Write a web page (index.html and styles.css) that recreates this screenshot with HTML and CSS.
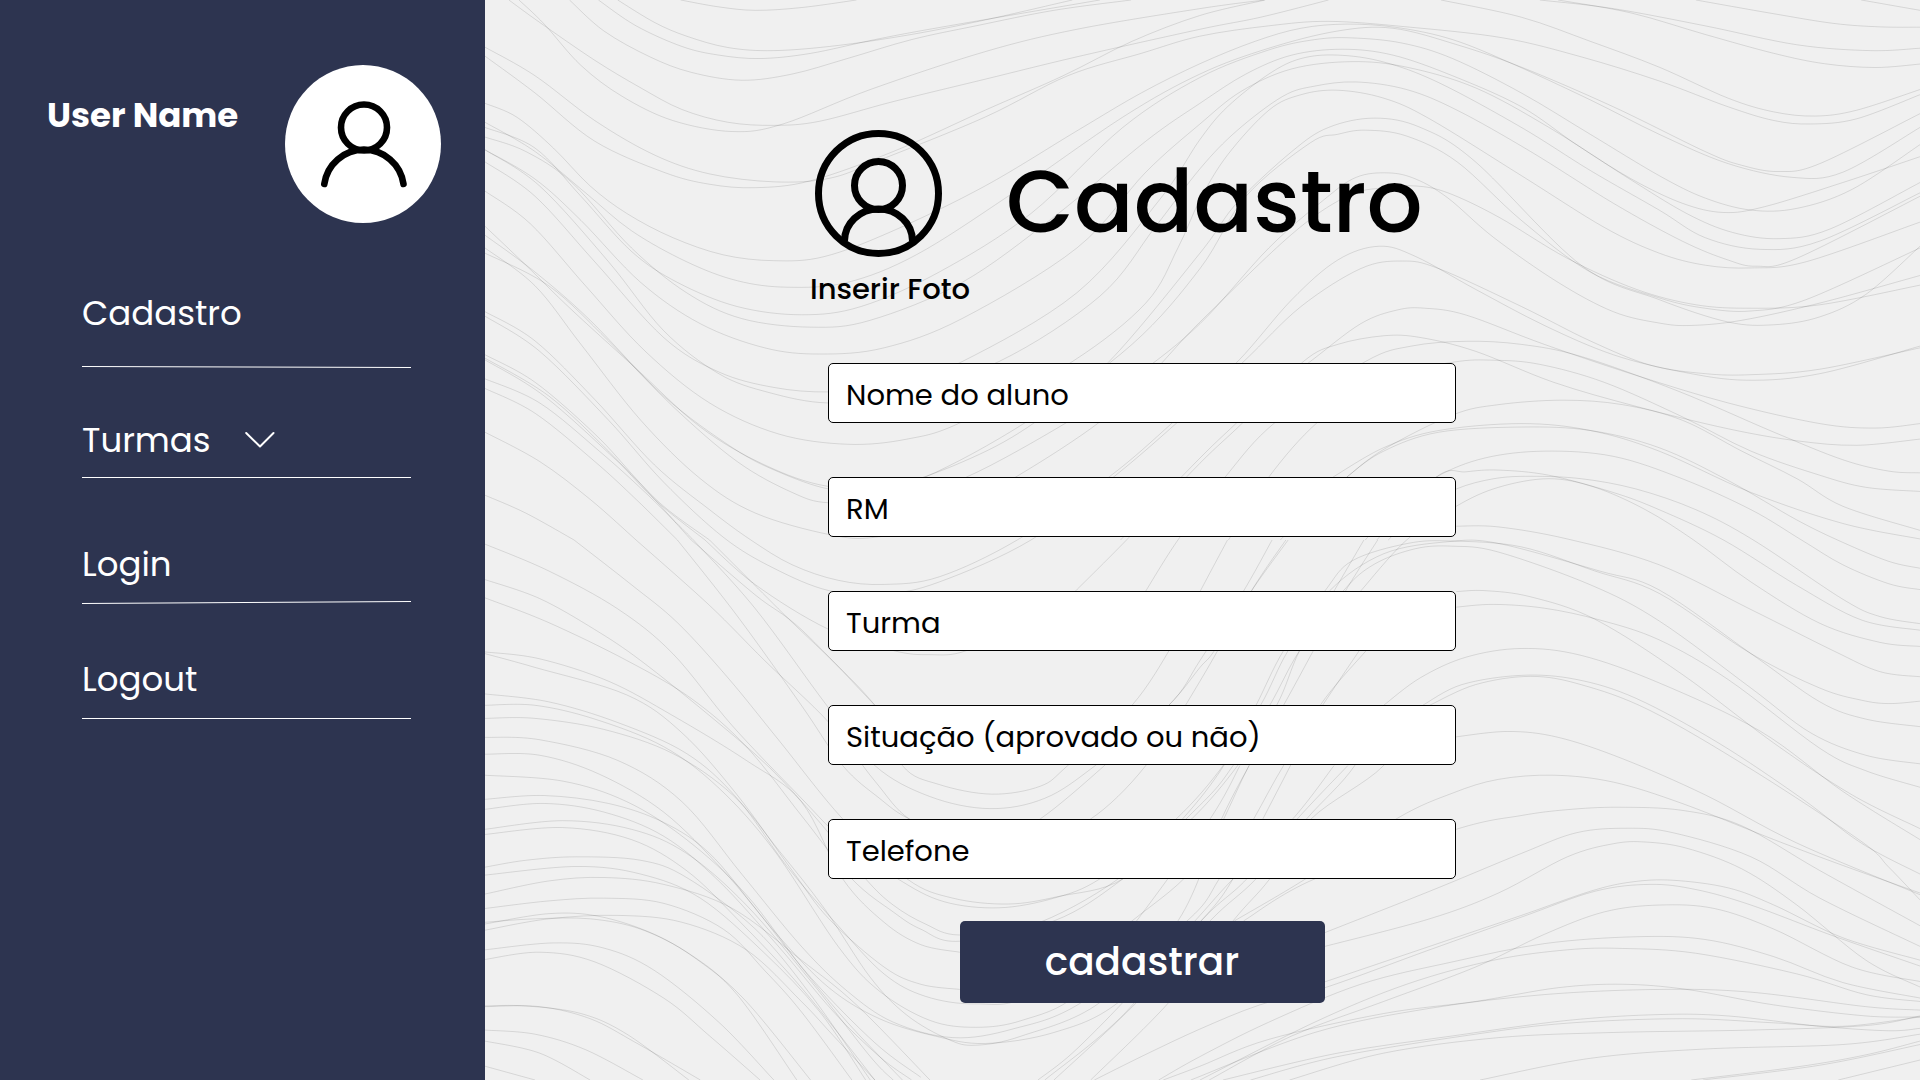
FILE: index.html
```html
<!DOCTYPE html>
<html lang="pt-BR">
<head>
<meta charset="utf-8">
<meta name="viewport" content="width=device-width, initial-scale=1">
<title>Cadastro</title>
<link rel="stylesheet" href="styles.css">
</head>
<body>
<div class="app">
  <aside class="sidebar">
    <div class="profile">
      <p class="profile-name">User Name</p>
      <svg class="avatar" viewBox="0 0 156 158" role="img" aria-label="Avatar">
        <ellipse cx="78" cy="79" rx="78" ry="79" fill="#fff"/>
        <g fill="none" stroke="#000" stroke-width="6.6" stroke-linecap="round">
          <circle cx="79" cy="62.5" r="23"/>
          <path d="M39.3 119A40 40 0 0 1 118.500 119"/>
        </g>
      </svg>
    </div>
    <nav class="menu" aria-label="Menu">
      <div class="menu-item roomy">
        <a href="#cadastro">Cadastro</a>
        <svg class="rule" viewBox="0 0 329 3" preserveAspectRatio="none" aria-hidden="true"><path d="M0 .5L329 1.5"/></svg>
      </div>
      <div class="menu-item">
        <a href="#turmas">Turmas
          <svg class="chevron" viewBox="0 0 30 18" aria-hidden="true"><path d="M1.200 2L15 15.500L28.500 2"/></svg>
        </a>
        <svg class="rule" viewBox="0 0 329 3" preserveAspectRatio="none" aria-hidden="true"><path d="M0 .5L329 .5"/></svg>
      </div>
      <div class="menu-item spaced">
        <a href="#login">Login</a>
        <svg class="rule" viewBox="0 0 329 3" preserveAspectRatio="none" aria-hidden="true"><path d="M0 2.500L329 .5"/></svg>
      </div>
      <div class="menu-item last">
        <a href="#logout">Logout</a>
        <svg class="rule" viewBox="0 0 329 3" preserveAspectRatio="none" aria-hidden="true"><path d="M0 2.500L329 2.500"/></svg>
      </div>
    </nav>
  </aside>

  <main class="content">
    <svg class="waves" viewBox="11 0 3125 3136" preserveAspectRatio="none" aria-hidden="true"></svg>
    <form class="form" action="#" method="post">
      <header class="heading">
        <button class="photo" type="button">
          <svg class="photo-icon" viewBox="0 0 127 127" aria-hidden="true">
            <g fill="none" stroke="#000" stroke-width="7">
              <circle cx="63.500" cy="63.500" r="60"/>
              <circle cx="63.500" cy="55.500" r="24"/>
              <path d="M29.500 111A34 32 0 0 1 97.500 111"/>
            </g>
          </svg>
          Inserir Foto
        </button>
        <h1 class="title">Cadastro</h1>
      </header>
      <div class="fields">
        <input class="field" type="text" name="nome" placeholder="Nome do aluno" aria-label="Nome do aluno">
        <input class="field" type="text" name="rm" placeholder="RM" aria-label="RM">
        <input class="field" type="text" name="turma" placeholder="Turma" aria-label="Turma">
        <input class="field" type="text" name="situacao" placeholder="Situação (aprovado ou não)" aria-label="Situação (aprovado ou não)">
        <input class="field" type="tel" name="telefone" placeholder="Telefone" aria-label="Telefone">
        <button class="submit" type="submit">cadastrar</button>
      </div>
    </form>
  </main>
</div>
<script src="waves.js"></script>
</body>
</html>
```
FILE: styles.css
```css
* {
  box-sizing: border-box;
}

body {
  margin: 0;
  color: #000;
  background: #f0f0f0;
  font-family: Poppins, Inter, "Open Sans", sans-serif;
}

.app {
  display: grid;
  grid-template-columns: minmax(440px, 485fr) 1435fr;
  min-height: 100vh;
}

.sidebar {
  padding: 65px 44px 48px 47px;
  color: #fff;
  background: #2d3450;
}

.profile {
  display: flex;
  justify-content: space-between;
}

.profile-name {
  margin: 23px 0 0;
  font-size: 34px;
  font-weight: 700;
  line-height: 54px;
}

.avatar {
  flex: none;
  width: 156px;
  height: 158px;
}

.menu {
  display: grid;
  gap: 44px;
  margin: 63px 30px 0 35px;
}

.menu-item a {
  display: flex;
  align-items: center;
  gap: 34px;
  color: inherit;
  font-size: 34px;
  font-weight: 400;
  line-height: 54px;
  text-decoration: none;
}

.rule {
  display: block;
  width: 100%;
  height: 3px;
  margin-top: 10px;
  fill: none;
  stroke: #fff;
  stroke-width: 1;
}

.roomy .rule {
  margin-top: 26px;
}

.spaced {
  padding-top: 13px;
}

.last {
  padding-top: 4px;
}

.chevron {
  width: 30px;
  height: 18px;
  fill: none;
  stroke: #fff;
  stroke-width: 2;
  stroke-linecap: round;
  stroke-linejoin: round;
}

.content {
  position: relative;
  padding: 130px 48px 76px 325px;
}

.waves {
  position: absolute;
  inset: 0;
  width: 100%;
  height: 100%;
}

.waves path {
  fill: none;
  stroke: #000;
  stroke-opacity: 0.11;
  stroke-width: 1;
  vector-effect: non-scaling-stroke;
}

.form {
  position: relative;
}

.heading {
  display: flex;
  gap: 36px;
}

.photo {
  display: grid;
  gap: 11px;
  padding: 0;
  border: 0;
  color: inherit;
  background: none;
  font: 500 29px/42px Poppins, Inter, "Open Sans", sans-serif;
  text-align: left;
}

.photo-icon {
  width: 127px;
  height: 127px;
  margin-left: 5px;
}

.title {
  margin: 4px 0 0;
  font-size: 88px;
  font-weight: 500;
  line-height: 136px;
}

.fields {
  display: grid;
  gap: 54px;
  max-width: 646px;
  margin-top: 53px;
  padding-left: 18px;
}

.field {
  width: 100%;
  height: 60px;
  padding: 4px 17px 0;
  border: 1px solid #000;
  border-radius: 5px;
  color: #000;
  background: #fff;
  font: 400 29px/45px Poppins, Inter, "Open Sans", sans-serif;
}

.field::placeholder {
  color: #000;
  opacity: 1;
}

.submit {
  justify-self: center;
  width: 365px;
  height: 82px;
  margin-top: -12px;
  padding: 0;
  border: 0;
  border-radius: 5px;
  color: #fff;
  background: #2d3450;
  font: 500 39px/60px Poppins, Inter, "Open Sans", sans-serif;
}
```
FILE: waves.js
```js
// Contour lines of the backdrop, one tile per quadrant: "x,y x,y ..." points.
const tiles = [
  { x: 0, y: 0, lines: `
437,0 520,20 600,30 700,22 820,0
300,0 380,65 450,105 540,138 640,147 780,132 940,100 1100,58 1290,0
258,0 340,75 440,135 520,160 610,170 720,155 860,115 1000,80 1350,0
195,0 270,90 370,165 460,210 570,233 680,215 800,170 940,115 1080,75 1250,30 1418,0
63,0 130,65 250,175 350,255 440,318 540,355 640,364 740,352 900,295 1100,230 1300,165 1568,85 1700,50 1848,0
85,0 140,70 220,190 310,280 420,350 550,382 660,360 850,260 1100,150 1300,85 1568,25 1708,0
11,137 120,220 250,350 380,450 500,505 640,528 760,518 870,465 1100,340 1280,220 1440,155 1568,105 1718,75 1848,62 2018,78 2228,110 2398,165 2568,235 2718,310 2818,350 2898,360 2998,345 3136,275
11,163 120,270 250,410 400,500 500,535 600,545 720,525 900,440 1100,320 1270,220 1420,120 1568,45 1710,0
11,300 80,340 160,430 240,540 320,620 420,690 530,740 640,757 750,745 900,670 1100,540 1300,380 1440,270 1568,185 1688,120 1788,82 1888,70 1998,80 2118,115 2248,185 2418,290 2568,390 2718,475 2858,515 2968,500 3136,370
11,355 120,440 230,560 330,670 450,760 560,815 670,834 800,820 950,740 1150,570 1400,340 1568,215 1718,140 1868,90 1988,82 2128,130 2268,195 2468,310 2668,440 2748,480 2828,498 2918,475 3136,330
11,370 120,430 220,570 330,730 430,820 560,890 700,914 830,890 1000,790 1200,620 1400,370 1568,225 1718,145 1818,115 1898,110 2008,125 2118,170 2268,270 2418,390 2568,510 2668,575 2768,610 2868,605 2988,550 3136,420
11,398 100,440 200,530 330,720 450,850 570,925 720,950 850,930 1050,820 1250,630 1450,410 1568,300 1668,215 1768,160 1878,143 1988,160 2118,220 2268,310 2388,420 2508,520 2618,590 2708,617 2798,600 2968,530 3136,455
11,435 120,520 220,640 350,820 480,940 620,1010 740,1028 880,1010 1050,925 1300,720 1450,500 1568,360 1658,265 1768,200 1898,179 2018,195 2168,255 2328,370 2498,515 2628,620 2728,675 2830,693 2940,665 3136,530
11,470 120,570 250,760 400,980 520,1080 640,1125 760,1138 900,1120 1050,1050 1300,850 1480,580 1568,405 1628,310 1718,215 1788,170 1868,160 1968,180 2088,240 2268,370 2418,495 2568,610 2668,690 2788,724 2918,700 3136,560
11,435 130,540 280,760 400,960 520,1085 630,1140 757,1170 900,1150 1130,1050 1350,860 1470,660 1568,490 1648,380 1748,280 1818,250 1908,238 2018,260 2128,320 2288,440 2468,590 2618,700 2718,755 2780,773 2868,750 3136,570
11,555 110,650 230,830 360,1020 500,1170 650,1260 800,1290 930,1275 1050,1225 1290,1050 1450,880 1520,720 1568,580 1628,450 1718,320 1788,275 1868,262 1968,285 2068,345 2268,510 2448,660 2568,735 2668,770 2768,778 2888,760 3136,645
11,657 100,770 200,900 340,1070 480,1240 620,1350 757,1412 900,1410 1070,1330 1210,1225 1370,1050 1568,735 1648,590 1768,440 1848,370 1948,343 2048,370 2168,470 2398,770 2568,870 2718,935 2818,943 2918,920 3018,855 3136,715
11,683 120,790 240,930 400,1150 550,1300 650,1370 760,1420 850,1420 970,1385 1190,1225 1420,1000 1568,780 1668,570 1808,415 1868,390 1928,378 2018,395 2128,470 2268,640 2418,790 2568,865 2668,895 2768,903 2888,870 3136,720
11,735 150,830 280,990 420,1180 560,1340 680,1430 760,1460 900,1450 1060,1385 1280,1225 1430,1090 1568,940 1718,720 1838,580 1908,515 1978,502 2038,520 2108,575 2208,690 2348,820 2468,905 2568,938 2638,945 2748,930 2918,880 3136,800
11,720 120,830 220,1000 350,1220 480,1390 600,1490 760,1552 860,1560 1000,1510 1350,1225 1568,935 1768,680 1888,570 1968,545 2038,540 2108,560 2218,630 2368,750 2518,840 2648,885 2768,895 2918,885 3136,828
11,905 120,990 250,1160 380,1350 500,1480 590,1568 680,1640 780,1685 880,1697 1000,1675 1170,1568 1370,1385 1510,1225 1650,1050 1768,870 1868,755 1958,715 2038,745 2168,840 2318,945 2468,1030 2618,1080 2758,1104 2918,1085 3136,1005
11,918 130,1020 280,1220 400,1400 530,1560 640,1650 760,1715 880,1725 1000,1690 1200,1568 1380,1385 1520,1225 1663,1050 1788,890 1918,780 2008,758 2088,780 2268,890 2418,990 2548,1060 2668,1085 2768,1088 2918,1072 3136,1010
11,1030 120,1110 250,1260 340,1390 460,1568
11,1040 150,1150 280,1310 380,1450 490,1568
11,1045 140,1150 300,1340 400,1470 500,1568
11,1100 130,1170 260,1310 360,1430 465,1568
11,1128 120,1200 250,1340 340,1450 430,1568
11,1255 130,1340 240,1450 340,1568
11,1438 100,1490 205,1568
1395,1568 1568,1330 1650,1225 1690,1170 1808,1050 1918,940 1998,900 2058,895 2148,915 2318,1000 2518,1090 2718,1170 2918,1230 3038,1243 3136,1230
1297,1716 1408,1568 1568,1345 1663,1225 1793,1050 1868,1000 1968,975 2048,980 2168,1020 2338,1110 2518,1180 2718,1245 2868,1280 2998,1293 3136,1275
1450,1716 1520,1568 1623,1385 1733,1225 1928,1050 2028,1005 2148,991 2268,1000 2398,1035 2608,1135 2818,1255 2968,1335 3068,1368 3136,1373
1630,1568 1718,1385 1825,1225 1960,1100 2118,1052 2208,1046 2308,1058 2448,1110 2618,1210 2768,1310 2918,1380 3018,1415 3136,1427` },
  { x: 1568, y: 0, lines: `
525,0 700,50 850,120 1000,195 1150,285 1250,325 1340,337 1430,320 1568,260
740,0 900,25 1100,75 1300,130 1460,147 1568,140
780,0 940,38 1100,100 1250,155 1360,185 1470,196 1568,186
1080,0 1250,40 1380,68 1480,78 1568,79
1440,0 1568,30
320,1385 400,1305 550,1205 650,1175 790,1162 920,1175 1050,1220 1180,1310 1300,1390 1400,1470 1568,1540
290,1385 400,1300 520,1250 700,1230 850,1250 1000,1310 1200,1430 1400,1520 1568,1565
175,1568 240,1480 320,1385 400,1310 520,1255 700,1240 850,1250 1000,1300 1150,1395 1300,1510 1400,1575 1500,1630 1568,1650
360,1568 420,1480 515,1385 620,1330 750,1310 900,1325 1050,1390 1200,1480 1310,1568 1400,1640 1500,1695 1568,1712
385,1568 515,1385 580,1370 650,1365 760,1380 900,1430 1000,1480 1140,1568 1300,1700 1440,1800 1568,1830
410,1568 480,1480 558,1420 640,1390 720,1383 830,1390 950,1420 1080,1480 1205,1568 1400,1740 1480,1790 1568,1811
350,1716 450,1568 558,1470 650,1415 760,1390 860,1415 970,1480 1075,1568 1200,1690 1350,1810 1480,1865 1568,1877
558,1528 650,1530 800,1565 1000,1640 1200,1770 1380,1890 1480,1950 1568,1965` },
  { x: 0, y: 1568, lines: `
500,0 650,200 860,480 920,655 1000,710 1115,738 1220,715 1280,655 1420,480 1510,300 1568,150 1628,0
465,0 600,200 755,480 860,655 980,745 1110,780 1230,750 1340,655 1500,480 1568,350 1663,148 1725,0
430,0 560,220 700,480 790,655 870,750 935,810 1050,870 1130,880 1230,850 1330,810 1450,655 1568,410 1680,148 1755,0
340,0 500,190 620,350 760,530 860,700 935,810 1040,860 1130,865 1220,810 1360,655 1500,480 1568,370 1600,320 1680,148 1760,0
490,0 600,130 757,258 900,321 980,333 1060,321 1200,230
460,0 600,160 700,260 860,480
205,0 330,130 430,240 540,400 650,580 790,810 930,984 1030,1040 1150,1057 1260,1035 1400,984 1530,810 1620,655 1690,480 1750,321 1840,148 1900,60 2020,10 2118,3 2268,20 2428,90 2568,155 2768,330 2918,430 3008,465 3068,475 3136,468
11,12 150,90 300,200 420,330 550,540 700,750 790,870 910,984 1010,1050 1130,1068 1250,1040 1350,984 1500,830 1610,670 1700,480 1760,321 1850,148 1968,40 2108,5 2218,10 2438,90 2568,145 2768,330 2918,470 3018,520 3136,542
11,115 130,170 250,260 350,350 500,510 630,660 740,820 840,984 900,1060 970,1115 1045,1147 1200,1120 1390,984 1568,770 1640,655 1720,480 1785,321 1880,148 1948,70 2038,25 2118,18 2218,35 2418,130 2568,235 2768,430 2898,560 3018,625 3136,650
11,168 150,240 320,350 460,460 580,600 700,800 810,984 900,1080 960,1130 1045,1165 1250,1106 1400,984 1550,810 1650,655 1735,480 1785,321 1860,148 1925,0
11,325 130,345 280,410 420,510 580,640 700,760 790,984 880,1110 960,1175 1045,1197
11,330 120,370 320,450 440,560 560,740 680,960 760,1100 880,1240 960,1290 1045,1305
11,447 150,470 300,530 450,620 560,750 670,950 780,1120 880,1260 970,1325 1080,1347 1200,1320 1420,1106 1568,930 1675,655 1750,480 1815,321 1885,148 1955,0
11,480 120,480 250,520 400,600 520,720 640,900 780,1180 870,1310 980,1395 1080,1415 1180,1395 1300,1320 1430,1106 1590,810 1655,655
11,518 120,518 270,550 420,620 550,740 650,900 750,1070 850,1270 930,1380 1020,1450 1080,1467 1180,1440 1350,1343 1520,1106 1615,810 1675,655
11,573 130,580 300,640 440,760 570,970 700,1180 800,1310 900,1400 1030,1445 1160,1420 1310,1343 1540,1106 1610,984 1685,810 1750,655 1835,480 1915,321
11,622 130,625 260,680 400,790 530,960 650,1150 760,1300 870,1390 990,1440 1100,1462 1250,1430 1390,1343 1570,1106 1640,984 1705,810 1765,655 1830,480 1930,321
11,683 180,700 320,760 450,870 580,1030 700,1240 800,1400 920,1568
11,753 140,742 280,765 400,820 500,910 600,1070 720,1270 860,1460 960,1560
11,782 140,765 270,790 400,860 520,990 650,1180 770,1370 870,1500 940,1568
11,840 180,815 330,840 450,910 580,1060 720,1280 850,1500 900,1568
11,855 180,835 330,870 450,960 560,1100 700,1300 860,1568
11,950 100,930 210,920 350,930 450,980 600,1130 720,1320 850,1568
11,973 210,948 350,970 480,1040 620,1200 740,1370 840,1568
11,1028 150,990 270,980 400,1000 550,1070 700,1220 820,1350 980,1568
11,1070 150,1048 270,1040 400,1055 530,1130 620,1250 700,1370 810,1568
11,1115 150,1085 260,1093 380,1145 480,1225 580,1340 720,1568
11,1110 120,1100 240,1100 350,1130 460,1205 560,1320 690,1568
11,1133 150,1100 300,1090 440,1110 580,1190 700,1340 770,1440 860,1568
11,1190 160,1170 270,1185 380,1250 520,1400 640,1568
11,1218 130,1197 250,1225 400,1330 500,1440 610,1568
11,1355 130,1355 240,1390 340,1460 480,1568
11,1353 100,1353 220,1375 320,1435 455,1568
11,1423 120,1435 230,1480 355,1568
11,1455 130,1490 240,1568
11,1528 120,1568
1215,1568 1290,1490 1400,1343 1480,1220 1568,1090 1640,984 1770,810 1860,655
1230,1568 1400,1380 1568,1110 1670,984 1780,810 1890,655
1250,1568 1430,1343 1590,1106 1690,984 1800,810 1905,655 1968,480
1330,1568 1500,1343 1640,1106 1720,984 1810,810 1968,655 2053,480` },
  { x: 1568, y: 1568, lines: `
558,150 620,147 720,165 860,230 1050,390 1250,590 1420,740 1568,838
558,195 640,187 750,198 870,232 1000,290 1150,405 1350,605 1450,670 1568,718
400,480 480,400 580,340 700,315 830,335 1000,415 1220,555 1400,730 1568,870
485,480 570,420 700,393 820,405 950,460 1130,590 1310,750 1440,880 1568,970
500,480 600,420 720,396 830,420 980,495 1200,665 1440,875 1500,950 1568,1045
550,573 670,556 780,573 920,635 1100,740 1300,880 1568,1030
75,1106 230,984 430,808 550,735 650,695 770,683 900,703 1050,765 1250,870 1400,945 1568,1025
95,1106 250,984 558,840 700,800 800,783 910,776 1050,785 1180,830 1350,960 1568,1120
272,1140 500,1020 700,910 820,850 930,837 1030,850 1200,920 1350,1040 1568,1180
272,1180 500,1100 650,1025 800,920 900,882 970,877 1060,895 1180,955 1300,1060 1450,1220 1568,1298
272,1283 500,1180 700,1090 850,1020 940,993 1030,988 1150,1010 1250,1060 1400,1155 1568,1220
-230,1568 -120,1495 0,1420 130,1350 272,1300 500,1190 700,1095 860,1020 980,1000 1080,1015 1200,1060 1380,1150 1568,1237
20,1568 200,1440 400,1340 600,1240 750,1145 880,1080 1000,1060 1120,1070 1250,1130 1420,1240 1568,1282
-90,1568 0,1500 150,1400 350,1290 550,1225 750,1172 950,1152 1100,1160 1250,1210 1400,1285 1568,1330
0,1568 250,1400 450,1290 640,1220 800,1190 920,1186 1080,1200 1300,1260 1450,1320 1568,1340
-80,1568 0,1528 150,1450 400,1375 600,1340 780,1300 920,1290 1060,1305 1250,1350 1450,1382 1568,1385
-20,1568 250,1430 500,1360 750,1320 1000,1305 1200,1313 1450,1355 1568,1365
50,1568 300,1490 550,1440 800,1395 1000,1378 1150,1382 1350,1412 1500,1425 1568,1418
110,1568 300,1500 600,1435 800,1403 1050,1390 1250,1402 1400,1412 1568,1385
195,1568 400,1490 650,1445 900,1430 1200,1423 1450,1410 1568,1382
610,1568 850,1505 1100,1478 1400,1465 1568,1435
1070,1568 1300,1530 1450,1495 1568,1455
1095,1568 1350,1525 1568,1465
1390,1568 1568,1510` }
];

// Smooth curve through all the points of one line.
function smooth(points) {
  let d = `M${points[0]}`;
  for (let i = 0; i < points.length - 1; i++) {
    const [a, b, c, e] = [points[i - 1] || points[i], points[i], points[i + 1], points[i + 2] || points[i + 1]];
    d += `C${b[0] + (c[0] - a[0]) / 6},${b[1] + (c[1] - a[1]) / 6} ${c[0] - (e[0] - b[0]) / 6},${c[1] - (e[1] - b[1]) / 6} ${c}`;
  }
  return d;
}

const waves = document.querySelector(".waves");
for (const tile of tiles) {
  for (const line of tile.lines.trim().split("\n")) {
    const points = line.split(" ").map(pair => {
      const [x, y] = pair.split(",").map(Number);
      return [x + tile.x, y + tile.y];
    });
    const path = document.createElementNS("http://www.w3.org/2000/svg", "path");
    path.setAttribute("d", smooth(points));
    waves.append(path);
  }
}
```
